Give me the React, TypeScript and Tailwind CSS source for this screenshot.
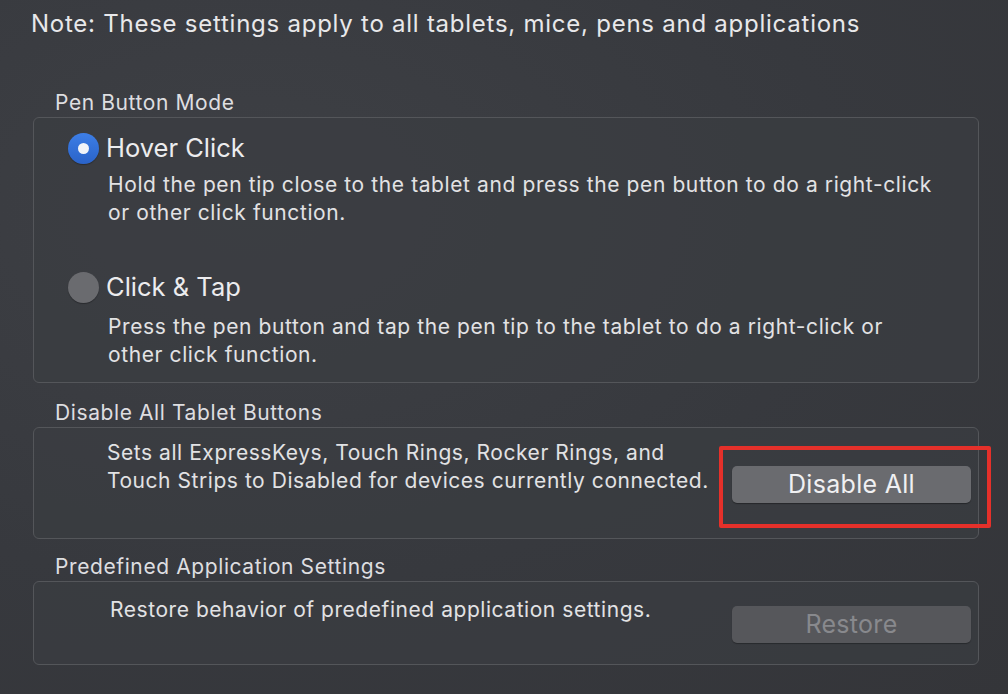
import React from "react";

const font = { fontFamily: "Inter, 'Noto Sans', 'Liberation Sans', sans-serif" };

function Radio({ on }: { on: boolean }) {
  return on ? (
    <div className="w-[31px] h-[31px] rounded-full bg-gradient-to-b from-[#3d7ee6] to-[#2a63c9] flex items-center justify-center shadow-[0_1px_1px_rgba(0,0,0,0.3)] shrink-0">
      <div className="w-[11px] h-[11px] rounded-full bg-[#f2f4f8]" />
    </div>
  ) : (
    <div className="w-[31px] h-[31px] rounded-full bg-[#6a6b6f] shadow-[0_1px_1px_rgba(0,0,0,0.3)] shrink-0" />
  );
}

export default function App() {
  return (
    <div
      style={font}
      className="w-[1008px] h-[694px] overflow-hidden bg-[radial-gradient(ellipse_at_25%_30%,#3e4045_0%,#37393e_55%,#343539_100%)] text-[#e4e4e6] flex flex-col"
    >
      <div className="mt-[10px] pl-[31px] h-[28px] leading-[28px] text-[24px] tracking-[0.75px] text-[#e8e8ea]">
        Note: These settings apply to all tablets, mice, pens and applications
      </div>

      <div className="mt-[53px] pl-[55px] h-[24px] leading-[24px] text-[21px] tracking-[0.6px] text-[#dedee0]">Pen Button Mode</div>
      <div className="mt-[2px] ml-[33px] w-[946px] h-[266px] rounded-[6px] border border-[#54565a] bg-[#3b3d42]/70 flex flex-col pl-[34px]">
        <div className="mt-[14px] flex items-center h-[32px]">
          <Radio on={true} />
          <span className="ml-[7px] text-[25.5px] leading-[32px] text-[#ececee]">Hover Click</span>
        </div>
        <div className="mt-[7px] pl-[40px] text-[21px] tracking-[0.6px] leading-[28px] text-[#e2e2e4]">
          Hold the pen tip close to the tablet and press the pen button to do a right-click
          <br />
          or other click function.
        </div>
        <div className="mt-[44px] flex items-center h-[32px]">
          <Radio on={false} />
          <span className="ml-[7px] text-[25.5px] leading-[32px] text-[#ececee]">Click &amp; Tap</span>
        </div>
        <div className="mt-[10px] pl-[40px] text-[21px] tracking-[0.6px] leading-[28px] text-[#e2e2e4]">
          Press the pen button and tap the pen tip to the tablet to do a right-click or
          <br />
          other click function.
        </div>
      </div>

      <div className="mt-[18px] pl-[55px] h-[24px] leading-[24px] text-[21px] tracking-[0.6px] text-[#dedee0]">Disable All Tablet Buttons</div>
      <div className="relative mt-[2px] ml-[33px] w-[946px] h-[112px] rounded-[6px] border border-[#54565a] bg-[#3b3d42]/70 flex">
        <div className="mt-[11px] ml-[73px] text-[21px] tracking-[0.55px] leading-[28px] text-[#e2e2e4]">
          Sets all ExpressKeys, Touch Rings, Rocker Rings, and
          <br />
          Touch Strips to Disabled for devices currently connected.
        </div>
        <div className="ml-auto mr-[7px] mt-[38px] w-[239px] h-[37px] rounded-[5px] bg-[#6a6b6f] shadow-[0_1px_1px_rgba(0,0,0,0.35)] flex items-center justify-center pt-[1px] text-[25px] tracking-[0.3px] text-[#f0f0f2]">
          Disable All
        </div>
        <div className="absolute left-[685px] top-[18px] w-[272px] h-[82px] border-[4px] border-[#e5302a] rounded-[2px]" />
      </div>

      <div className="mt-[16px] pl-[55px] h-[24px] leading-[24px] text-[21px] tracking-[0.6px] text-[#dedee0]">Predefined Application Settings</div>
      <div className="mt-[2px] ml-[33px] w-[946px] h-[84px] rounded-[6px] border border-[#54565a] bg-[#3b3d42]/70 flex">
        <div className="mt-[14px] ml-[76px] text-[21px] tracking-[0.55px] leading-[28px] text-[#e2e2e4]">
          Restore behavior of predefined application settings.
        </div>
        <div className="ml-auto mr-[7px] mt-[24px] w-[239px] h-[37px] rounded-[5px] bg-[#56575b] shadow-[0_1px_1px_rgba(0,0,0,0.3)] flex items-center justify-center pt-[1px] text-[25px] tracking-[0.3px] text-[#88898d]">
          Restore
        </div>
      </div>
    </div>
  );
}
